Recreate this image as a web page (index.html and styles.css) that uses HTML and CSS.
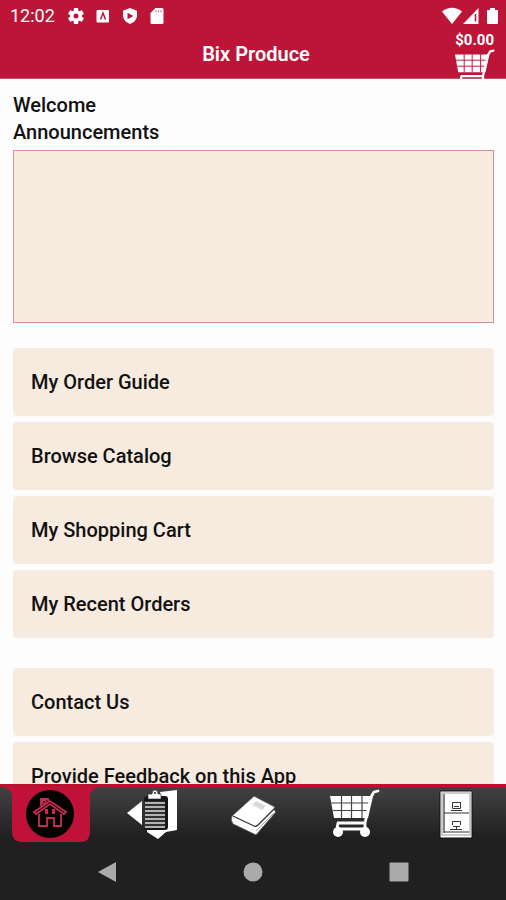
FILE: index.html
```html
<!DOCTYPE html>
<html lang="en">
<head>
<meta charset="utf-8">
<meta name="viewport" content="width=device-width, initial-scale=1">
<title>Bix Produce</title>
<link rel="stylesheet" href="styles.css">
</head>
<body>
<svg class="defs" aria-hidden="true">
  <symbol id="cart" viewBox="0 0 50 50">
    <path d="M0 7H43L38 29H4Z" fill="#fff"/>
    <path d="M1 14H41M3 21.500H39M11.500 6V29M21.500 6V29M32 6V29" fill="none" stroke="var(--grid)" stroke-width="1.200"/>
    <path d="M48 2L44 3L41 8L35 34H8L7 40H37M35 34V40" fill="none" stroke="#fff" stroke-width="2.800" stroke-linejoin="round" stroke-linecap="round"/>
    <circle cx="8" cy="43" r="5" fill="#fff"/>
    <circle cx="35" cy="43" r="5" fill="#fff"/>
  </symbol>
</svg>
<header class="top">
  <div class="status">
    <span class="time">12:02</span>
    <svg class="glyph" viewBox="0 0 16 16" aria-hidden="true"><g fill="#fff"><circle cx="8" cy="8" r="5.600"/><path d="M6 0h4l.6 4H5.400zM6 16h4l.6-4H5.400z"/><path d="M6 0h4l.6 4H5.400zM6 16h4l.6-4H5.400z" transform="rotate(60 8 8)"/><path d="M6 0h4l.6 4H5.400zM6 16h4l.6-4H5.400z" transform="rotate(120 8 8)"/></g><circle cx="8" cy="8" r="2.500" fill="#bd1538"/></svg>
    <svg class="glyph" viewBox="0 0 16 16" aria-hidden="true"><rect x="1.500" y="2" width="12.500" height="12.500" rx="1" fill="#fff"/><path d="M5.500 11.500L8 5l2.500 6.500" fill="none" stroke="#bd1538" stroke-width="1.500"/></svg>
    <svg class="glyph" viewBox="0 0 16 16" aria-hidden="true"><path d="M8 0l7 2.800V7c0 4.500-3 7.500-7 9-4-1.500-7-4.500-7-9V2.800z" fill="#fff"/><path d="M5.500 4.800L11.500 8l-6 3.200z" fill="#bd1538"/></svg>
    <svg class="glyph" viewBox="0 0 16 16" aria-hidden="true"><path d="M6.500 0H13q1.500 0 1.500 1.500v13q0 1.500-1.500 1.500H3q-1.500 0-1.500-1.500V5z" fill="#fff"/><path d="M7 2v2.500M9.500 2v2.500M12 2v2.500" stroke="#bd1538" stroke-width=".6"/></svg>
    <svg class="signals" viewBox="0 0 56 18" aria-hidden="true"><path d="M0 4.500Q10 -3 20 4.500L10 17z" fill="#fff"/><path d="M21 17L36.500 1V17z" fill="#fff"/><path d="M33.500 7V14.500" stroke="#bd1538" stroke-width="1.500"/><path d="M45 3h3V1h5v2h3v13q0 1-1 1h-9q-1 0-1-1z" fill="#fff"/></svg>
  </div>
  <div class="titlebar">
    <h1>Bix Produce</h1>
    <a class="total" href="#cart" aria-label="Cart total $0.00">
      <span>$0.00</span>
      <svg viewBox="0 0 50 40" aria-hidden="true"><use href="#cart" width="50" height="50"/></svg>
    </a>
  </div>
</header>
<main>
  <h2>Welcome</h2>
  <h2 id="news">Announcements</h2>
  <section class="announcements" aria-labelledby="news"></section>
  <nav class="menu">
    <a href="#guide">My Order Guide</a>
    <a href="#catalog">Browse Catalog</a>
    <a href="#cart">My Shopping Cart</a>
    <a href="#orders">My Recent Orders</a>
  </nav>
  <nav class="menu">
    <a href="#contact">Contact Us</a>
    <a href="#feedback">Provide Feedback on this App</a>
  </nav>
</main>
<footer>
  <nav class="tabs">
    <a class="active" href="#home" aria-label="Home">
      <svg viewBox="1 0 102 56" aria-hidden="true">
        <path d="M3 0H101Q91 2 91 9V45Q91 55 81 55H23Q13 55 13 45V9Q13 2 3 0Z" fill="#c01238"/>
        <circle cx="51" cy="27" r="24" fill="#000"/>
        <g fill="none" stroke="#c82d50" stroke-width="1.800"><path d="M35 25L51 14L67 25L65 27L51 17L37 27Z"/><path d="M40 27V39H48V31H55V39H62V27"/><path d="M42 19V12H49V14"/><circle cx="45" cy="15" r="1.800"/></g>
        <g fill="#c82d50"><rect x="46" y="22" width="3" height="5"/><rect x="53" y="22" width="3" height="5"/></g>
      </svg>
    </a>
    <a href="#guide" aria-label="Order guide">
      <svg viewBox="2 0 102 56" aria-hidden="true">
        <path d="M27 26L42 14V38Z" fill="#fff"/>
        <path d="M60 5L77 3V43L66 45L58 52L47 45V41H66Z" fill="#fff"/>
        <rect x="44" y="9" width="24" height="34" rx="3" fill="#161616"/>
        <path d="M44 14H65V41H44Z" fill="#303030"/>
        <path d="M45 16H65M45 20H65M45 24H65M45 28H65M45 32H65M45 36H65M45 40H65" stroke="#ddd" stroke-width="1.500"/>
        <path d="M48 7H52Q52 3 55 3T58 7H61V12H48Z" fill="#fff" stroke="#333" stroke-width=".7"/><circle cx="55" cy="6" r="1" fill="#333"/>
      </svg>
    </a>
    <a href="#catalog" aria-label="Catalog">
      <svg viewBox="2 0 102 56" aria-hidden="true">
        <path d="M30 29L52 9L73 20Q71 23 74 25L54 48L31 37Q28 33 30 29Z" fill="#fff" stroke="#444" stroke-width=".8"/>
        <path d="M31 29L52 39Q54 40 56 38L73 21" fill="none" stroke="#333" stroke-width="1.200"/>
        <path d="M54 44L72 26" stroke="#aaa" fill="none"/>
        <path d="M54 14L64 19L60 23L50 18Z" fill="#ddd"/><path d="M53 16L62 21" stroke="#ccc"/>
      </svg>
    </a>
    <a href="#cart" aria-label="Shopping cart"><svg class="cart" viewBox="0 0 50 50" aria-hidden="true"><use href="#cart"/></svg></a>
    <a href="#orders" aria-label="Recent orders">
      <svg viewBox="0 0 102 56" aria-hidden="true">
        <rect x="36" y="4" width="32" height="47" rx="1" fill="#fff" stroke="#111"/>
        <rect x="38" y="6" width="28" height="42" fill="none" stroke="#bbb" stroke-width="1.500"/>
        <path d="M40 7V46M40 26H65M40 45H65" stroke="#333" stroke-width="1.200"/>
        <g fill="none" stroke="#333"><path d="M48.500 15.500H56.500V21.500H48.500ZM47 23.500H58M50 19.500H55"/><path d="M48.500 38V34.500H56.500V38M46 42.500H58M49 39.500H56M52.500 40V42"/></g>
      </svg>
    </a>
  </nav>
  <div class="system">
    <button aria-label="Back"><svg viewBox="0 0 22 22" aria-hidden="true"><path d="M2 11L20 1V21Z" fill="#aaa"/></svg></button>
    <button aria-label="Home screen"><svg viewBox="0 0 22 22" aria-hidden="true"><circle cx="11" cy="11" r="9.500" fill="#aaa"/></svg></button>
    <button aria-label="Overview"><svg viewBox="0 0 22 22" aria-hidden="true"><rect x="1.500" y="1.500" width="19" height="19" rx="1" fill="#aaa"/></svg></button>
  </div>
</footer>
</body>
</html>
```
FILE: styles.css
```css
* { box-sizing: border-box; }
body {
  margin: 0;
  height: 100vh;
  display: flex;
  flex-direction: column;
  background: #fdfdfd;
  color: #111;
  font-family: Roboto, "Liberation Sans", sans-serif;
}
a { color: inherit; text-decoration: none; }
svg { display: block; }
.defs { position: absolute; width: 0; height: 0; }

.top {
  flex: none;
  background: #bd1538;
  color: #fff;
  border-bottom: 1px solid #c4536b;
  --grid: #bd1538;
}
.status {
  display: flex;
  align-items: center;
  gap: 11px;
  height: 31px;
  padding: 0 8px 0 10px;
}
.time { font-size: 18px; margin-right: 2px; }
.glyph { width: 16px; height: 16px; }
.signals { width: 56px; height: 18px; margin-left: auto; }
.titlebar {
  display: grid;
  grid-template-columns: 1fr auto 1fr;
  height: 47px;
  padding: 1px 10px 0 16px;
}
h1 {
  grid-column: 2;
  margin: 0;
  font-size: 20px;
  line-height: 44px;
  font-weight: 600;
}
.total {
  justify-self: end;
  font-size: 15px;
  line-height: 17px;
  font-weight: 700;
}
.total span { display: block; padding-right: 2px; }
.total svg { width: 40px; height: 29px; }
.total svg { height: 32px; }

main {
  flex: 1;
  min-height: 0;
  overflow: hidden;
  padding: 13px 12px 0 13px;
}
h2 {
  margin: 0;
  font-size: 20px;
  line-height: 27px;
  font-weight: 500;
}
.announcements {
  height: 173px;
  margin: 4px 0 25px;
  background: #f7ebe0;
  border: 1px solid #d98f9b;
}
.menu {
  display: flex;
  flex-direction: column;
  gap: 6px;
  margin-bottom: 30px;
}
.menu a {
  padding: 0 18px;
  background: #f7ebe0;
  border-radius: 4px;
  font-size: 20px;
  line-height: 68px;
  font-weight: 500;
}

footer {
  flex: none;
  border-top: 3px solid #b9112e;
  background: linear-gradient(#424242, #202020 50px);
  --grid: #444;
}
.tabs {
  display: grid;
  grid-template-columns: repeat(5, 1fr);
}
.tabs a { display: flex; justify-content: center; }
.tabs svg { width: 102px; height: 56px; flex: none; }
.tabs .cart { width: 50px; height: 50px; margin-top: 2px; }
.system {
  display: grid;
  grid-template-columns: repeat(3, 1fr);
  justify-items: center;
  align-items: center;
  height: 57px;
  padding: 0 34px;
}
.system button {
  padding: 0;
  border: 0;
  background: none;
}
.system svg { width: 22px; height: 22px; }
```
